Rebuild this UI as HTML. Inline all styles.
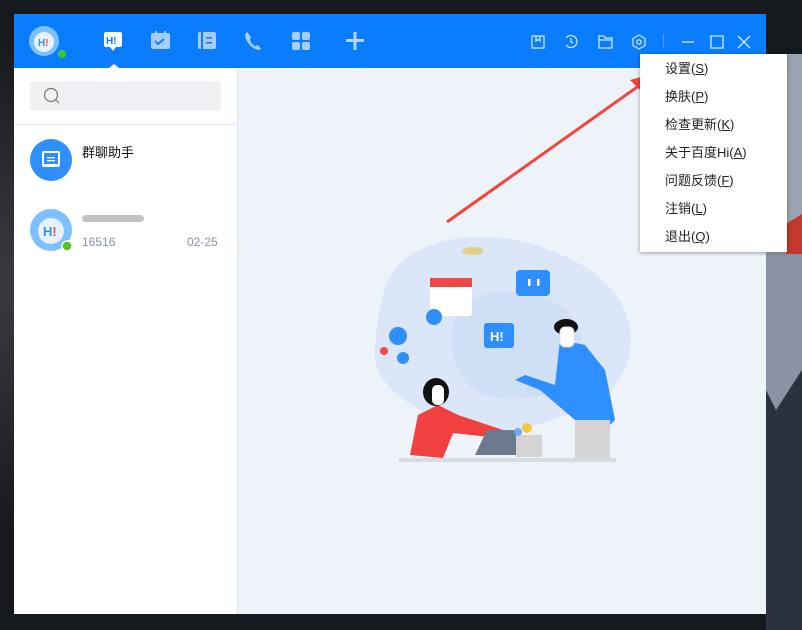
<!DOCTYPE html>
<html><head><meta charset="utf-8"><style>
*{margin:0;padding:0;box-sizing:border-box}
body{width:802px;height:630px;overflow:hidden;position:relative;font-family:"Liberation Sans","Noto Sans CJK SC",sans-serif;background:#1a1d22}
.bg{position:absolute;inset:0;background:radial-gradient(circle at 5% 45%,#3a3d42 0,#15181c 30%),#111}
.win{position:absolute;left:14px;top:14px;width:752px;height:600px;background:#eef2f9}
.hdr{position:absolute;left:0;top:0;width:752px;height:54px;background:#0a7cfe}
.left{position:absolute;left:0;top:54px;width:224px;height:546px;background:#fff;border-right:1px solid #e4e6ea}
.search{position:absolute;left:16px;top:13px;width:191px;height:30px;background:#f0f1f5;border-radius:3px}
.sep{position:absolute;left:0;top:56px;width:224px;height:1px;background:#e6e7ea}
.menu{position:absolute;left:640px;top:54px;width:147px;height:198px;background:#fff;box-shadow:0 1px 4px rgba(0,0,0,.35)}
.menu div{height:28px;line-height:24px;padding-left:25px;font-size:13px;color:#222}
.menu div:first-child{margin-top:3px}
</style></head><body>
<div class="bg"></div>
<svg style="position:absolute;left:766px;top:250px" width="36" height="380"><rect width="36" height="380" fill="#2b3140"/><path d="M0 0H36V120L10 160 0 140Z" fill="#8a93a3"/></svg>
<svg style="position:absolute;left:766px;top:54px" width="36" height="200"><rect width="36" height="200" fill="#9aa3b2"/><path d="M20 170 36 160V200H20Z" fill="#c0392b"/></svg>
<div class="win">
<div class="hdr">
<svg width="752" height="54" style="position:absolute;left:0;top:0">
<circle cx="30" cy="27" r="15" fill="#7cc0ff"/><circle cx="30" cy="28" r="10" fill="#e6f3ff"/><text x="24" y="32" font-size="10" font-weight="bold" fill="#3a8ee6" font-family="Liberation Sans">H<tspan fill="#f04848">!</tspan></text>
<circle cx="48" cy="40" r="5" fill="#3ac43a" stroke="#0a7cfe" stroke-width="1.5"/>
<rect x="90" y="18" width="18" height="15" rx="2" fill="#fff"/><path d="M96 33l3 4 3-4z" fill="#fff"/><text x="92" y="30" font-size="10" font-weight="bold" fill="#0a7cfe" font-family="Liberation Sans">H!</text>
<path d="M95 54l5-4 5 4z" fill="#fff"/>
<rect x="137" y="19" width="19" height="16" rx="2" fill="#a6cdfd"/><rect x="141" y="17" width="2" height="4" fill="#a6cdfd"/><rect x="150" y="17" width="2" height="4" fill="#a6cdfd"/><path d="M141 27l3 3 6-5" stroke="#0a7cfe" stroke-width="1.8" fill="none"/>
<rect x="184" y="18" width="18" height="17" rx="2" fill="#a6cdfd"/><rect x="187" y="18" width="2" height="17" fill="#0a7cfe"/><rect x="192" y="23" width="6" height="1.6" fill="#0a7cfe"/><rect x="192" y="28" width="6" height="1.6" fill="#0a7cfe"/>
<path d="M233 18c-3 2-2 7 2 12s9 7 12 5l-3-4-3 1c-2-1-4-3-5-6l1-3z" fill="#a6cdfd"/>
<rect x="278" y="18" width="8" height="8" rx="2" fill="#a6cdfd"/><rect x="288" y="18" width="8" height="8" rx="2" fill="#a6cdfd"/><rect x="278" y="28" width="8" height="8" rx="2" fill="#a6cdfd"/><rect x="288" y="28" width="8" height="8" rx="2" fill="#a6cdfd"/>
<rect x="332" y="25" width="18" height="3" fill="#b6d6fe"/><rect x="339.5" y="18" width="3" height="18" fill="#b6d6fe"/>
<g stroke="#cfe3ff" stroke-width="1.3" fill="none"><rect x="518" y="22" width="12" height="12"/><path d="M522 22v5l2-1.5 2 1.5v-5"/>
<path d="M552 24a6 6 0 1 1 0 7"/><path d="M557 24v4l2 1"/>
<path d="M585 22h5l1 2h7v10h-13z"/><path d="M585 26h13"/>
<path d="M625 21l6 3.5v7l-6 3.5-6-3.5v-7z"/><circle cx="625" cy="28" r="2.2"/>
</g>
<rect x="649" y="20" width="1" height="14" fill="#4f9dfd"/>
<g stroke="#d6e8ff" stroke-width="1.3" fill="none"><path d="M668 28h12"/><rect x="697" y="22" width="12" height="12"/><path d="M724 22l12 12M736 22l-12 12"/></g>
</svg></div>
<div class="left">
<div class="search"><svg width="30" height="30"><circle cx="21" cy="14" r="6.5" stroke="#777" stroke-width="1.2" fill="none"/><path d="M26 19l3 3" stroke="#777" stroke-width="1.2"/></svg></div>
<div class="sep"></div>
<svg width="224" height="160" style="position:absolute;left:0;top:66px">
<circle cx="37" cy="26" r="21" fill="#2f8ffe"/><rect x="28" y="17" width="18" height="16" rx="2" fill="#fff"/><rect x="30" y="19" width="14" height="11" fill="#2f8ffe"/><rect x="33" y="23" width="8" height="1.3" fill="#fff"/><rect x="33" y="26" width="8" height="1.3" fill="#fff"/>
<circle cx="37" cy="96" r="21" fill="#7cc0ff"/><circle cx="37" cy="97" r="13" fill="#e6f3ff"/><text x="29" y="102" font-size="13" font-weight="bold" fill="#3a8ee6" font-family="Liberation Sans">H<tspan fill="#f04848">!</tspan></text>
<circle cx="53" cy="112" r="5" fill="#52c41a" stroke="#fff" stroke-width="1.5"/>
<rect x="68" y="81" width="62" height="7" rx="3.5" fill="#999" opacity=".6"/>
</svg>
<div style="position:absolute;left:68px;top:74px;font-size:13px;color:#111">群聊助手</div>
<div style="position:absolute;left:68px;top:167px;font-size:12px;color:#8a93a3">16516</div>
<div style="position:absolute;left:173px;top:167px;font-size:12px;color:#8a93a3">02-25</div>
</div>
<svg width="528" height="546" style="position:absolute;left:224px;top:54px">
<g transform="translate(-238,-68)">
<path d="M420 250c40-20 90-15 130 0s75 40 80 80-20 70-50 80-70 30-120 15-90-40-85-80 5-75 45-95z" fill="#dbe7f8"/>
<path d="M470 300c30-15 70-10 95 10s25 60 0 75-65 20-90 5-35-75-5-90z" fill="#cfdff5"/>
<ellipse cx="473" cy="251" rx="11" ry="4" fill="#e2cf8a"/>
<rect x="430" y="278" width="42" height="38" rx="3" fill="#fff"/><rect x="430" y="278" width="42" height="9" fill="#f04848"/>
<circle cx="434" cy="317" r="8" fill="#2f8ffe"/>
<rect x="516" y="270" width="34" height="26" rx="4" fill="#2f8ffe"/><rect x="528" y="279" width="2.5" height="7" fill="#fff"/><rect x="537" y="279" width="2.5" height="7" fill="#fff"/>
<rect x="484" y="323" width="30" height="25" rx="3" fill="#2f8ffe"/><text x="490" y="341" font-size="13" font-weight="bold" fill="#fff" font-family="Liberation Sans">H!</text>
<circle cx="398" cy="336" r="9" fill="#2f8ffe"/><circle cx="403" cy="358" r="6" fill="#2f8ffe"/><circle cx="384" cy="351" r="4" fill="#f04848"/>
<path d="M560 340l25 5 20 25 10 50-10 10-30-10-35-30-25-10 10-5 30 10z" fill="#2f8ffe"/>
<ellipse cx="566" cy="327" rx="12" ry="8" fill="#111"/><rect x="560" y="327" width="14" height="20" rx="5" fill="#fff" stroke="#ddd"/>
<rect x="575" y="420" width="35" height="42" fill="#d4d4d4"/>
<path d="M410 455l8-40 20-10 20 10 45 15-5 8-45-5-10 25z" fill="#f04040"/>
<ellipse cx="436" cy="392" rx="13" ry="14" fill="#111"/><rect x="432" y="385" width="12" height="20" rx="5" fill="#fff"/>
<path d="M475 455l12-25h30v25z" fill="#6c7a8e"/>
<rect x="516" y="435" width="26" height="22" fill="#d4d4d4"/>
<circle cx="527" cy="428" r="5" fill="#f5c842"/><circle cx="518" cy="432" r="4" fill="#6fa8f5"/>
<rect x="399" y="458" width="217" height="4" fill="#d8dbe0"/>
</g></svg>
</div>
<svg width="802" height="630" style="position:absolute;left:0;top:0"><path d="M447 222L640 85" stroke="#f2453e" stroke-width="3"/><path d="M660 72l-30 8 14 14z" fill="#f2453e"/></svg>
<div class="menu">
<div>设置(<u>S</u>)</div><div>换肤(<u>P</u>)</div><div>检查更新(<u>K</u>)</div><div>关于百度Hi(<u>A</u>)</div><div>问题反馈(<u>F</u>)</div><div>注销(<u>L</u>)</div><div>退出(<u>Q</u>)</div>
</div>
</body></html>
